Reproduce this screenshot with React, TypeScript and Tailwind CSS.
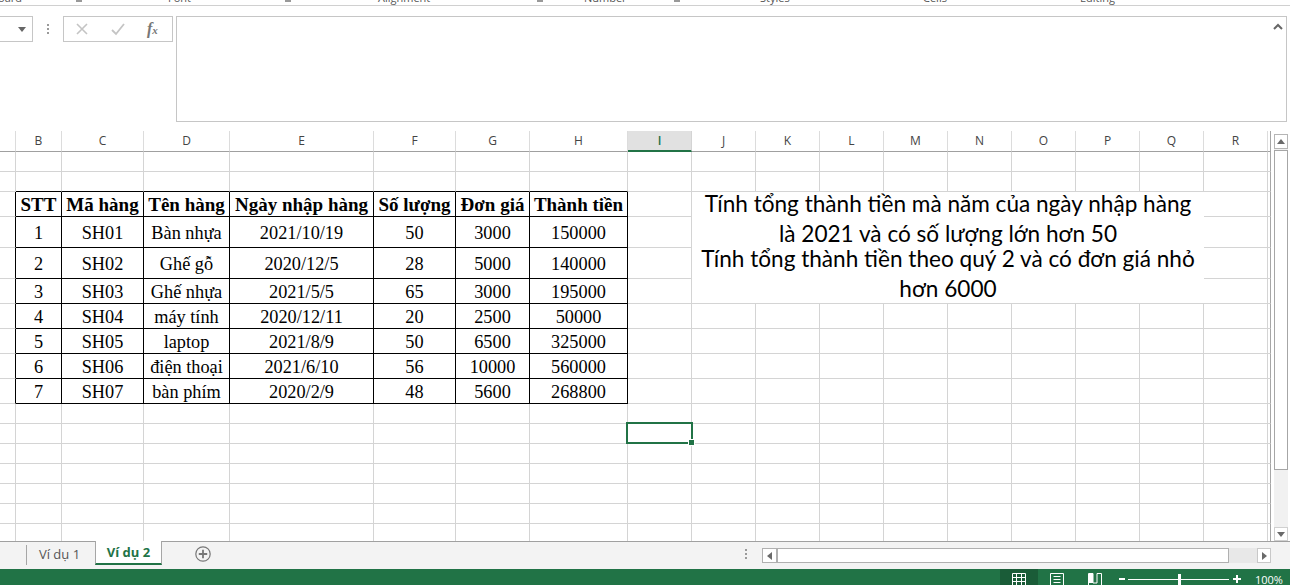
import React from "react";

const columns = ["", "B", "C", "D", "E", "F", "G", "H", "I", "J", "K", "L", "M", "N", "O", "P", "Q", "R", ""];

const tableRows: string[][] = [
  ["STT", "Mã hàng", "Tên hàng", "Ngày nhập hàng", "Số lượng", "Đơn giá", "Thành tiền"],
  ["1", "SH01", "Bàn nhựa", "2021/10/19", "50", "3000", "150000"],
  ["2", "SH02", "Ghế gỗ", "2020/12/5", "28", "5000", "140000"],
  ["3", "SH03", "Ghế nhựa", "2021/5/5", "65", "3000", "195000"],
  ["4", "SH04", "máy tính", "2020/12/11", "20", "2500", "50000"],
  ["5", "SH05", "laptop", "2021/8/9", "50", "6500", "325000"],
  ["6", "SH06", "điện thoại", "2021/6/10", "56", "10000", "560000"],
  ["7", "SH07", "bàn phím", "2020/2/9", "48", "5600", "268800"],
];

const ROW_COUNT = 17;
const TABLE_TOP = 2;
const TABLE_BOTTOM = 9;

function Cell({ r, c }: { r: number; c: number }) {
  const inTable = r >= TABLE_TOP && r <= TABLE_BOTTOM && c >= 1 && c <= 7;
  const rightBlack = (c === 0 || inTable) && r >= TABLE_TOP && r <= TABLE_BOTTOM;
  const bottomBlack = (inTable || r === TABLE_TOP - 1) && c >= 1 && c <= 7;
  const last = r === ROW_COUNT - 1;
  const text = inTable ? tableRows[r - TABLE_TOP][c - 1] : "";
  const isHeader = r === TABLE_TOP;
  return (
    <div
      className={`relative flex items-center justify-center whitespace-nowrap border-solid font-['Liberation_Serif',serif] leading-none text-black ${
        c === 18 ? "border-r border-r-[#a6a6a6]" : rightBlack ? "border-r border-r-black" : "border-r border-r-[#d4d4d4]"
      } ${last ? "" : bottomBlack ? "border-b border-b-black" : "border-b border-b-[#d4d4d4]"} ${
        isHeader ? "text-[19px] font-bold" : "pt-[3px] text-[18.3px]"
      }`}
    >
      {text}
      {r === 11 && c === 8 ? (
        <div className="absolute -left-[2px] -top-[2px] z-10 h-[22px] w-[67px] border-2 border-[#217346]">
          <div className="absolute -bottom-[4px] -right-[4px] h-[7px] w-[7px] border border-white bg-[#217346]" />
        </div>
      ) : null}
    </div>
  );
}

function Merged({ children, bordered }: { children: React.ReactNode; bordered?: boolean }) {
  return (
    <div
      className={`col-span-8 row-span-2 flex items-center justify-center bg-white pb-[3px] text-center font-['Lato','Noto_Sans',sans-serif] text-[22.6px] leading-[30px] text-black ${
        bordered ? "border-b border-[#d4d4d4]" : ""
      }`}
    >
      <span className="whitespace-nowrap">{children}</span>
    </div>
  );
}

function Sheet() {
  const cells: React.ReactNode[] = [];
  columns.forEach((name, c) => {
    const selected = name === "I";
    cells.push(
      <div
        key={`h${c}`}
        className={`flex items-center justify-center border-b font-['Open_Sans',sans-serif] text-[12px] ${
          selected
            ? "border-b-2 border-r border-b-[#217346] border-r-[#d4d4d4] bg-[#e1e1e1] font-semibold text-[#217346]"
            : `border-r border-b-[#a0a0a0] ${c === 18 ? "border-r-[#a6a6a6]" : "border-r-[#dcdcdc]"} text-[#444444]`
        }`}
      >
        {name}
      </div>
    );
  });
  for (let r = 0; r < ROW_COUNT; r++) {
    for (let c = 0; c < columns.length; c++) {
      if (r >= 2 && r <= 5 && c >= 9 && c <= 16) {
        if (c === 9 && r === 2)
          cells.push(
            <Merged key="m1">
              Tính tổng thành tiền mà năm của ngày nhập hàng
              <br />
              là 2021 và có số lượng lớn hơn 50
            </Merged>
          );
        if (c === 9 && r === 4)
          cells.push(
            <Merged key="m2" bordered>
              Tính tổng thành tiền theo quý 2 và có đơn giá nhỏ
              <br />
              hơn 6000
            </Merged>
          );
        continue;
      }
      cells.push(<Cell key={`${r}-${c}`} r={r} c={c} />);
    }
  }
  return (
    <div className="grid h-[410px] w-[1271px] shrink-0 grid-cols-[16px_46px_82px_86px_144px_82px_74px_98px_64px_64px_64px_64px_64px_64px_64px_64px_64px_64px_3px] grid-rows-[21px_20px_20px_25px_31px_31px_25px_25px_25px_25px_25px_20px_20px_20px_20px_20px_20px_17px]">
      {cells}
    </div>
  );
}

function Arrow({ dir }: { dir: "up" | "down" | "left" | "right" }) {
  const pts = {
    up: "1,7 5,2 9,7",
    down: "1,3 5,8 9,3",
    left: "7,1 2,5 7,9",
    right: "3,1 8,5 3,9",
  }[dir];
  return (
    <svg width="10" height="10" viewBox="0 0 10 10">
      <polygon points={pts} fill="#6a6a6a" />
    </svg>
  );
}

function Dots() {
  return (
    <div className="flex flex-col gap-[2px]">
      <span className="h-[2px] w-[2px] bg-[#9a9a9a]" />
      <span className="h-[2px] w-[2px] bg-[#9a9a9a]" />
      <span className="h-[2px] w-[2px] bg-[#9a9a9a]" />
    </div>
  );
}

function RibbonStrip() {
  const label = "shrink-0 -mt-[8px] font-['Open_Sans',sans-serif] text-[11px] leading-[11px] text-[#555555]";
  const mark = "shrink-0 h-[2px] bg-[#999999]";
  return (
    <div className="flex h-[6px] shrink-0 items-start overflow-hidden border-b border-[#d0d0d0] bg-white">
      <span className={`${label} -ml-[32px] w-[54px] text-right`}>Clipboard</span>
      <span className={`${mark} ml-[54px] w-[6px]`} />
      <span className={`${label} ml-[86px] w-[24px]`}>Font</span>
      <span className={`${mark} ml-[93px] w-[6px]`} />
      <span className={`${label} ml-[87px] w-[56px]`}>Alignment</span>
      <span className={`${mark} ml-[103px] w-[6px]`} />
      <span className={`${label} ml-[41px] w-[45px]`}>Number</span>
      <span className={`${mark} ml-[45px] w-[6px]`} />
      <span className={`${label} ml-[80px] w-[34px]`}>Styles</span>
      <span className={`${label} ml-[129px] w-[26px]`}>Cells</span>
      <span className={`${label} ml-[131px] w-[40px]`}>Editing</span>
    </div>
  );
}

function FormulaBar() {
  return (
    <div className="flex h-[125px] shrink-0 items-start bg-white pt-[10px]">
      <div className="flex h-[26px] w-[33px] items-center justify-end border-y border-r border-[#c6c6c6] pr-[6px]">
        <svg width="8" height="5" viewBox="0 0 8 5">
          <polygon points="0,0 8,0 4,5" fill="#666666" />
        </svg>
      </div>
      <div className="flex h-[26px] w-[30px] items-center justify-center">
        <Dots />
      </div>
      <div className="relative flex h-[26px] w-[110px] items-center border border-[#c6c6c6]">
        <svg className="ml-[11px]" width="14" height="14" viewBox="0 0 14 14" fill="none" stroke="#c4c4c4" strokeWidth="1.6">
          <path d="M2 2 L12 12 M12 2 L2 12" />
        </svg>
        <svg className="ml-[21px]" width="16" height="14" viewBox="0 0 16 14" fill="none" stroke="#c4c4c4" strokeWidth="1.8">
          <path d="M2 8 L6 12 L14 2" />
        </svg>
        <span className="ml-[21px] font-['Liberation_Serif',serif] text-[16px] font-bold italic leading-none text-[#777777]">
          f<span className="text-[11px]">x</span>
        </span>
      </div>
      <div className="ml-[3px] flex h-[106px] w-[1111px] justify-end border border-[#c6c6c6] pr-[3px] pt-[6px]">
        <svg width="10" height="7" viewBox="0 0 10 7" fill="none" stroke="#666666" strokeWidth="2">
          <path d="M1 6 L5 2 L9 6" />
        </svg>
      </div>
    </div>
  );
}

function VerticalScroll() {
  return (
    <div className="ml-[3px] flex h-[410px] w-[14px] flex-col pt-[3px]">
      <div className="flex h-[15px] shrink-0 items-center justify-center border border-[#b5b5b5] bg-white">
        <Arrow dir="up" />
      </div>
      <div className="flex flex-1 flex-col bg-[#f1f1f1]">
        <div className="mt-px h-[320px] border border-[#a6a6a6] bg-white" />
      </div>
      <div className="flex h-[14px] shrink-0 items-center justify-center border border-[#d0d0d0] bg-white">
        <Arrow dir="down" />
      </div>
    </div>
  );
}

function TabBar() {
  return (
    <div className="flex h-[28px] shrink-0 border-t border-[#a0a0a0] bg-[#f3f3f3] font-['Open_Sans',sans-serif] text-[13px]">
      <div className="mt-[3px] h-[20px] w-[27px] border-r border-[#a6a6a6]" />
      <div className="flex h-[22px] w-[68px] items-center justify-center pr-[3px] pt-[3px] text-[#555555]">Ví dụ 1</div>
      <div className="-mt-px flex h-[24px] w-[67px] items-center justify-center border-x border-b-2 border-x-[#a6a6a6] border-b-[#217346] bg-white pt-px font-bold text-[#217346]">
        Ví dụ 2
      </div>
      <div className="ml-[33px] flex h-[24px] items-center">
        <svg width="16" height="16" viewBox="0 0 16 16" fill="none" stroke="#777777">
          <circle cx="8" cy="8" r="7.2" strokeWidth="1.2" />
          <path d="M8 3.8 V12.2 M3.8 8 H12.2" strokeWidth="1.8" />
        </svg>
      </div>
      <div className="ml-[534px] flex h-[24px] w-[3px] items-center">
        <Dots />
      </div>
      <div className="ml-[14px] mt-[6px] flex h-[15px] w-[509px]">
        <div className="flex w-[16px] shrink-0 items-center justify-center border border-r-2 border-[#b0b0b0] bg-white">
          <Arrow dir="left" />
        </div>
        <div className="h-full w-[451px] shrink-0 border-y border-r border-[#b0b0b0] bg-white" />
        <div className="h-full w-[28px] shrink-0 bg-[#e8e8e8]" />
        <div className="flex w-[14px] shrink-0 items-center justify-center border border-[#c8c8c8] bg-white">
          <Arrow dir="right" />
        </div>
      </div>
    </div>
  );
}

function StatusBar() {
  return (
    <div className="flex h-[16px] shrink-0 items-start overflow-hidden bg-[#217346] text-white">
      <div className="ml-[1000px] flex h-[16px] w-[38px] items-start justify-center bg-[#1a5c38] pt-[4px]">
        <svg width="14" height="14" viewBox="0 0 14 14" fill="none" stroke="#ffffff" strokeWidth="1">
          <path d="M.5 .5 H13.5 V13.5 H.5 Z M.5 4.5 H13.5 M.5 8.5 H13.5 M4.5 .5 V13.5 M9.5 .5 V13.5" />
        </svg>
      </div>
      <div className="flex h-[16px] w-[38px] items-start justify-center pt-[4px]">
        <svg width="14" height="14" viewBox="0 0 14 14" fill="none" stroke="#ffffff" strokeWidth="1">
          <path d="M.5 .5 H13.5 V13.5 H.5 Z M3.5 3.5 H10.5 M3.5 6.5 H10.5 M3.5 9.5 H10.5" />
        </svg>
      </div>
      <div className="flex h-[16px] w-[38px] items-start justify-center pt-[4px]">
        <svg width="14" height="14" viewBox="0 0 14 14">
          <path d="M.5 .5 H5 V10 H9 V.5 H13.5 V13.5 H.5 Z" fill="none" stroke="#ffffff" />
          <path d="M1 1 H5 V10 H1 Z" fill="#ffffff" />
        </svg>
      </div>
      <div className="ml-[5px] mt-[9px] h-[2px] w-[6px] bg-white" />
      <div className="relative ml-[3px] mt-[10px] h-px w-[101px] bg-white">
        <div className="absolute -top-[5px] left-[50px] h-[16px] w-[3px] bg-white" />
      </div>
      <div className="relative ml-[4px] mt-[6px] h-[9px] w-[8px]">
        <div className="absolute left-0 top-[3px] h-[2px] w-[8px] bg-white" />
        <div className="absolute left-[3px] top-0 h-[8px] w-[2px] bg-white" />
      </div>
      <span className="ml-[14px] font-['Open_Sans',sans-serif] text-[11px] leading-[21px]">100%</span>
    </div>
  );
}

export default function App() {
  return (
    <div className="flex h-[585px] w-[1290px] flex-col overflow-hidden bg-white">
      <RibbonStrip />
      <FormulaBar />
      <div className="flex h-[410px] shrink-0">
        <Sheet />
        <VerticalScroll />
      </div>
      <TabBar />
      <StatusBar />
    </div>
  );
}
